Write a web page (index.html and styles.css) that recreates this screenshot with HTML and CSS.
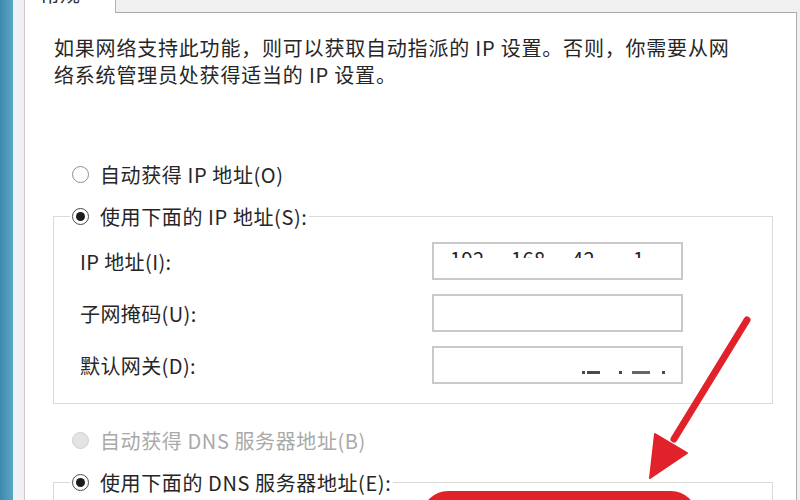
FILE: index.html
```html
<!DOCTYPE html>
<html lang="zh-CN">
<head>
<meta charset="utf-8">
<title>Internet 协议版本 4 (TCP/IPv4) 属性</title>
<link rel="stylesheet" href="styles.css">
</head>
<body>
<div class="window">
  <div class="side"></div>
  <div class="strip"></div>
  <div class="main">
    <div class="tabs">
      <div class="tab"><span class="tab-label">常规</span></div>
      <div class="tab-rest"></div>
    </div>
    <div class="panel">
      <p class="intro">如果网络支持此功能，则可以获取自动指派的 IP 设置。否则，你需要从网<br>络系统管理员处获得适当的 IP 设置。</p>

      <div class="option opt-first"><span class="radio"></span><span>自动获得 IP 地址(O)</span></div>

      <fieldset class="group">
        <legend class="legend-opt"><span class="radio on"></span><span>使用下面的 IP 地址(S):</span></legend>
        <div class="rows">
          <div class="row">
            <span class="label">IP 地址(I):</span>
            <div class="field field-ip">
              <div class="ip-clip">
                <span class="octet">192</span><span class="octet">168</span><span class="octet">42</span><span class="octet">1</span>
              </div>
            </div>
          </div>
          <div class="row">
            <span class="label">子网掩码(U):</span>
            <div class="field"></div>
          </div>
          <div class="row">
            <span class="label">默认网关(D):</span>
            <div class="field field-gw">
              <span class="m dot"></span><span class="m dash1"></span><span class="m dot d2"></span><span class="m dash2"></span><span class="m dot d3"></span>
            </div>
          </div>
        </div>
      </fieldset>

      <div class="option opt-dns disabled"><span class="radio off"></span><span>自动获得 DNS 服务器地址(B)</span></div>

      <fieldset class="group">
        <legend class="legend-opt"><span class="radio on"></span><span>使用下面的 DNS 服务器地址(E):</span></legend>
        <div class="rows">
          <div class="row">
            <span class="label">首选 DNS 服务器(P):</span>
            <div class="field"></div>
          </div>
          <div class="row">
            <span class="label">备用 DNS 服务器(A):</span>
            <div class="field"></div>
          </div>
        </div>
      </fieldset>
    </div>
  </div>

  <svg class="arrow" width="130" height="200" viewBox="0 0 130 200" xmlns="http://www.w3.org/2000/svg">
    <line x1="117" y1="20" x2="44" y2="139" stroke="#e1222a" stroke-width="7" stroke-linecap="round"/>
    <polygon points="20,178 57,153 25,134" fill="#e1222a" stroke="#e1222a" stroke-width="2" stroke-linejoin="round"/>
  </svg>
  <div class="mark"></div>
</div>
</body>
</html>
```

FILE: styles.css
```css
html, body {
  margin: 0;
  padding: 0;
}

body {
  width: 800px;
  height: 500px;
  overflow: hidden;
  background: #f0f0f0;
  font-family: "Noto Sans CJK SC", "Liberation Sans", sans-serif;
  color: #262626;
}

.window {
  position: relative;
  display: flex;
  width: 800px;
  height: 500px;
  overflow: hidden;
}

.side {
  flex: none;
  width: 13px;
  background: linear-gradient(to right, #3c8aad, #5aa6c6);
}

.strip {
  flex: none;
  width: 11px;
  background: linear-gradient(to right, #eef6f9, #f1eef0);
}

.main {
  flex: 1;
  min-width: 0;
  display: flex;
  flex-direction: column;
  margin-right: 3px;
}

.tabs {
  flex: none;
  display: flex;
  height: 13px;
}

.tab {
  flex: none;
  width: 92px;
  box-sizing: border-box;
  background: #fff;
  border-left: 1px solid #cfc9cb;
  border-right: 1px solid #b2b2b2;
  padding-left: 15px;
  overflow: hidden;
}

.tab-label {
  display: block;
  margin-top: -16px;
  font-size: 20px;
  line-height: 20px;
  color: #333;
}

.tab-rest {
  flex: 1;
  background: #f0f0f0;
  border-bottom: 1px solid #a9a9a9;
}

.panel {
  flex: 1;
  background: #fff;
  border-left: 1px solid #cfc9cb;
  border-right: 1px solid #acacac;
  padding: 21px 0 0 29px;
}

.intro {
  margin: 0;
  font-size: 20px;
  line-height: 27px;
  letter-spacing: 0.8px;
  white-space: nowrap;
}

.option,
.legend-opt {
  display: flex;
  align-items: center;
  gap: 11px;
  height: 28px;
  font-size: 20px;
  letter-spacing: 0.6px;
  white-space: nowrap;
}

.option {
  margin-left: 18px;
}

.opt-first {
  margin-top: 72px;
}

.opt-dns {
  margin-top: 22px;
}

.disabled {
  color: #a9a9a9;
}

.radio {
  flex: none;
  display: flex;
  align-items: center;
  justify-content: center;
  width: 17px;
  height: 17px;
  box-sizing: border-box;
  border-radius: 50%;
  border: 1.5px solid #8e8e8e;
  background: #fff;
}

.radio.on {
  border-color: #4a4a4a;
}

.radio.on::after {
  content: "";
  width: 9px;
  height: 9px;
  border-radius: 50%;
  background: #1c1c1c;
}

.radio.off {
  background: #e4e4e4;
  border-color: #d0d0d0;
}

.group {
  width: 720px;
  min-width: 0;
  box-sizing: border-box;
  margin: 14px 0 0 -1px;
  padding: 12px 0 19px 16px;
  border: 1px solid #dadada;
}

.legend-opt {
  padding: 0 2px;
}

.rows {
  display: flex;
  flex-direction: column;
  gap: 14px;
  padding-left: 10px;
}

.row {
  display: flex;
  align-items: center;
  height: 38px;
  font-size: 20px;
  letter-spacing: 0.4px;
}

.label {
  flex: none;
  width: 352px;
  white-space: nowrap;
}

.field {
  flex: none;
  width: 251px;
  height: 38px;
  box-sizing: border-box;
  border: 2px solid #c9c9c9;
  background: #fff;
}

.field-ip {
  padding: 5px 0 0 16px;
}

.ip-clip {
  display: flex;
  height: 9px;
  overflow: hidden;
  font-size: 20px;
  line-height: 20px;
  color: #222;
}

.octet {
  width: 61px;
  flex: none;
}

.field-gw {
  display: flex;
  align-items: center;
  padding: 14px 0 0 148px;
}

.m {
  flex: none;
  height: 3px;
  background: #4a4a4a;
}

.dot {
  width: 3px;
}

.dash1 {
  width: 13px;
  margin-left: 2px;
}

.d2 {
  margin-left: 19px;
}

.dash2 {
  width: 18px;
  margin-left: 10px;
  background: #666;
}

.d3 {
  margin-left: 12px;
}

.arrow {
  position: absolute;
  left: 630px;
  top: 300px;
}

.mark {
  position: absolute;
  left: 422px;
  top: 491px;
  width: 275px;
  height: 60px;
  box-sizing: border-box;
  border: 9px solid #e1222a;
  border-radius: 26px;
}
```
